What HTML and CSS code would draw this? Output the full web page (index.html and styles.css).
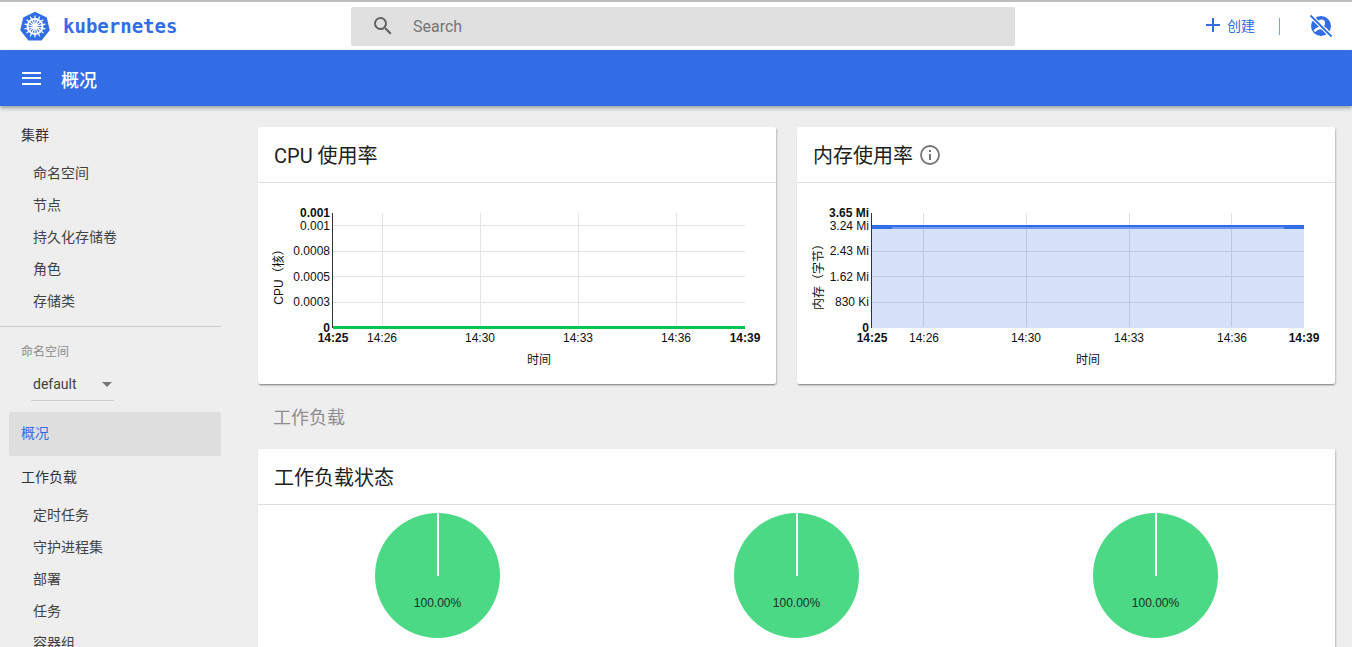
FILE: index.html
```html
<!DOCTYPE html>
<html lang="zh-CN">
<head>
   <meta charset="UTF-8">
   <meta name="viewport" content="width=device-width, initial-scale=1.0">
   <title>概况 - Kubernetes Dashboard</title>
   <link rel="stylesheet" href="styles.css">
</head>
<body>
   <header class="topbar">
      <div class="brand">
         <svg class="brand-logo" viewBox="0 0 32 32" width="30" height="30">
            <path d="M16 .8 28.6 6.9 31.7 20.5 23 31.4H9L.3 20.5 3.400 6.900Z" fill="#326de6"/>
            <g fill="none" stroke="#fff">
               <circle cx="16" cy="16.500" r="8" stroke-width="2"/>
               <circle cx="16" cy="16.500" r="2.200" fill="#fff" stroke="none"/>
               <path d="M16 5.500V27.500M7.400 9.700 24.600 23.300M24.600 9.700 7.400 23.300M5.300 19 26.700 14M26.700 19 5.300 14M11.200 26.500 20.800 6.500M20.800 26.500 11.200 6.500" stroke-width="1.300" stroke-linecap="round"/>
            </g>
         </svg>
         <span class="brand-name">kubernetes</span>
      </div>
      <div class="search">
         <svg class="search-icon" viewBox="0 0 24 24" width="24" height="24">
            <path fill="#616161" d="M15.500 14h-.79l-.28-.27A6.470 6.470 0 0 0 16 9.500 6.500 6.500 0 1 0 9.500 16c1.610 0 3.090-.59 4.230-1.570l.27.28v.79l5 4.990L20.490 19l-4.990-5zm-6 0C7.010 14 5 11.990 5 9.500S7.010 5 9.500 5 14 7.010 14 9.500 11.990 14 9.500 14z"/>
         </svg>
         <span class="search-text">Search</span>
      </div>
      <div class="actions">
         <svg class="plus-icon" viewBox="0 0 14 14" width="14" height="14">
            <path d="M6 0h2v6h6v2H8v6H6V8H0V6h6z" fill="#326de6"/>
         </svg>
         <span class="create">创建</span>
         <span class="divider"></span>
         <svg class="user-icon" viewBox="0 0 24 24" width="24" height="24">
            <circle cx="12" cy="12" r="10" fill="#326de6"/>
            <circle cx="12.500" cy="9" r="3.600" fill="#fff"/>
            <path d="M5.500 17.500c1.500-2.600 4-3.500 6.800-3.500 2.700 0 5 .9 6.300 3.500" fill="none" stroke="#fff" stroke-width="2.500"/>
            <path d="M2.500 2.500 21.500 21.500" stroke="#fff" stroke-width="4"/>
            <path d="M1.500 1.500 22.500 22.500" stroke="#326de6" stroke-width="1.800"/>
         </svg>
      </div>
   </header>

   <div class="titlebar">
      <span class="menu-icon"><i></i><i></i><i></i></span>
      <span class="page-title">概况</span>
   </div>

   <div class="layout">
      <nav class="sidebar">
         <div class="nav-head">集群</div>
         <div class="nav-item">命名空间</div>
         <div class="nav-item">节点</div>
         <div class="nav-item">持久化存储卷</div>
         <div class="nav-item">角色</div>
         <div class="nav-item">存储类</div>
         <hr class="nav-line">
         <div class="ns-label">命名空间</div>
         <div class="ns-select"><span>default</span><i class="caret"></i></div>
         <div class="nav-head nav-active">概况</div>
         <div class="nav-head nav-after">工作负载</div>
         <div class="nav-item">定时任务</div>
         <div class="nav-item">守护进程集</div>
         <div class="nav-item">部署</div>
         <div class="nav-item">任务</div>
         <div class="nav-item">容器组</div>
      </nav>

      <main class="content">
         <div class="chart-row">
            <section class="card card-cpu">
               <h2 class="card-title">CPU 使用率</h2>
               <svg class="chart" viewBox="258 183 518 201" width="518" height="201">
                  <g class="grid">
                     <path d="M333 225.500H745M333 251.500H745M333 276.500H745M333 302.500H745"/>
                     <path d="M382.500 213V327M480.500 213V327M578.500 213V327M676.500 213V327"/>
                  </g>
                  <path class="axis" d="M332.500 213V328"/>
                  <rect x="333" y="326" width="412" height="3" fill="#00c752"/>
                  <g class="tick tick-end">
                     <text class="tick-bold" x="330" y="217">0.001</text>
                     <text x="330" y="230">0.001</text>
                     <text x="330" y="255">0.0008</text>
                     <text x="330" y="281">0.0005</text>
                     <text x="330" y="306">0.0003</text>
                     <text class="tick-bold" x="330" y="332">0</text>
                  </g>
                  <g class="tick tick-mid">
                     <text class="tick-bold" x="333" y="342">14:25</text>
                     <text x="382" y="342">14:26</text>
                     <text x="480" y="342">14:30</text>
                     <text x="578" y="342">14:33</text>
                     <text x="676" y="342">14:36</text>
                     <text class="tick-bold" x="745" y="342">14:39</text>
                     <text x="539" y="364">时间</text>
                     <text transform="translate(283 274) rotate(-90)">CPU（核）</text>
                  </g>
               </svg>
            </section>

            <section class="card card-mem">
               <h2 class="card-title">内存使用率
                  <svg class="info-icon" viewBox="0 0 20 20" width="20" height="20">
                     <circle cx="10" cy="10" r="9" fill="none" stroke="#757575" stroke-width="1.800"/>
                     <path d="M9 9h2v6H9zM9 5h2v2H9z" fill="#757575"/>
                  </svg>
               </h2>
               <svg class="chart" viewBox="797 183 538 201" width="538" height="201">
                  <g class="grid">
                     <path d="M871 251.500H1304M871 276.500H1304M871 302.500H1304"/>
                     <path d="M923.500 213V327M1026.500 213V327M1129.500 213V327M1231.500 213V327"/>
                  </g>
                  <rect x="871" y="226" width="433" height="102" fill="#326de6" fill-opacity=".2"/>
                  <rect x="871" y="225" width="433" height="2" fill="#326de6"/>
                  <rect x="871" y="227" width="433" height="2" fill="#6f98ee"/>
                  <rect x="871" y="227" width="21" height="2" fill="#326de6"/>
                  <rect x="1284" y="227" width="20" height="2" fill="#326de6"/>
                  <path class="axis" d="M871.500 213V328"/>
                  <g class="tick tick-end">
                     <text class="tick-bold" x="869" y="217">3.65 Mi</text>
                     <text x="869" y="230">3.24 Mi</text>
                     <text x="869" y="255">2.43 Mi</text>
                     <text x="869" y="281">1.62 Mi</text>
                     <text x="869" y="306">830 Ki</text>
                     <text class="tick-bold" x="869" y="332">0</text>
                  </g>
                  <g class="tick tick-mid">
                     <text class="tick-bold" x="872" y="342">14:25</text>
                     <text x="924" y="342">14:26</text>
                     <text x="1026" y="342">14:30</text>
                     <text x="1129" y="342">14:33</text>
                     <text x="1232" y="342">14:36</text>
                     <text class="tick-bold" x="1304" y="342">14:39</text>
                     <text x="1088" y="364">时间</text>
                     <text transform="translate(823 274) rotate(-90)">内存（字节）</text>
                  </g>
               </svg>
            </section>
         </div>

         <h3 class="section-title">工作负载</h3>

         <section class="card card-status">
            <h2 class="card-title">工作负载状态</h2>
            <div class="pie-row">
               <div class="pie"><span class="pie-gap"></span><span class="pie-label">100.00%</span></div>
               <div class="pie"><span class="pie-gap"></span><span class="pie-label">100.00%</span></div>
               <div class="pie"><span class="pie-gap"></span><span class="pie-label">100.00%</span></div>
            </div>
         </section>
      </main>
   </div>
</body>
</html>
```

FILE: styles.css
```css
* {
    box-sizing: border-box;
}

html, body {
    height: 100%;
}

body {
    margin: 0;
    display: flex;
    flex-direction: column;
    overflow: hidden;
    background: #eeeeee;
    color: #212121;
    font-family: Roboto, "Noto Sans CJK SC", sans-serif;
}

/* top bar */
.topbar {
    display: flex;
    align-items: center;
    flex: none;
    height: 50px;
    padding-left: 20px;
    background: #ffffff;
    border-top: 2px solid #bdbdbd;
}

.brand {
    display: flex;
    align-items: center;
    width: 331px;
}

.brand-name {
    margin-left: 13px;
    color: #326de6;
    font-family: "DejaVu Sans Mono", monospace;
    font-size: 19px;
    font-weight: 700;
}

.search {
    display: flex;
    align-items: center;
    width: 664px;
    height: 39px;
    padding-left: 20px;
    background: #e0e0e0;
    border-radius: 2px;
}

.search-text {
    margin-left: 18px;
    color: #757575;
    font-size: 16px;
}

.actions {
    display: flex;
    align-items: center;
    margin-left: 191px;
}

.plus-icon {
    margin-top: -2px;
}

.create {
    margin: -2px 0 0 7px;
    color: #326de6;
    font-size: 14px;
}

.divider {
    width: 1px;
    height: 17px;
    margin: 0 29px 0 24px;
    background: #7f9fdf;
}

/* blue title bar */
.titlebar {
    display: flex;
    align-items: center;
    flex: none;
    height: 56px;
    padding-left: 22px;
    background: #326de6;
    box-shadow: 0 2px 4px rgba(0, 0, 0, .35);
    color: #ffffff;
    position: relative;
}

.menu-icon {
    display: flex;
    flex-direction: column;
    gap: 3.500px;
    width: 19px;
}

.menu-icon i {
    height: 2px;
    background: #ffffff;
}

.page-title {
    margin-left: 20px;
    padding-top: 1px;
    font-size: 18px;
    font-weight: 500;
}

.layout {
    display: flex;
    flex: 1;
    min-height: 0;
}

/* side navigation */
.sidebar {
    flex: none;
    width: 229px;
    padding: 7px 8px 0 0;
    font-size: 14px;
}

.nav-head {
    height: 44px;
    padding-left: 21px;
    line-height: 44px;
    color: #333333;
}

.nav-item {
    height: 32px;
    padding-left: 33px;
    line-height: 32px;
    color: #424242;
}

.nav-line {
    height: 1px;
    margin: 9px 0 0;
    border: 0;
    background: #d0d0d0;
}

.ns-label {
    margin: 17px 0 0 21px;
    color: #8a8a8a;
    font-size: 12px;
    line-height: 17px;
}

.ns-select {
    display: flex;
    align-items: center;
    justify-content: space-between;
    width: 83px;
    height: 33px;
    margin: 7px 0 0 31px;
    padding: 0 2px;
    border-bottom: 1px solid #d0d0d0;
    color: #424242;
    font-size: 14px;
}

.caret {
    width: 0;
    height: 0;
    border-left: 5px solid transparent;
    border-right: 5px solid transparent;
    border-top: 5px solid #757575;
}

.nav-active {
    margin: 11px 0 0 9px;
    padding-left: 12px;
    background: #dedede;
    border-radius: 2px;
    color: #326de6;
    line-height: 42px;
}

.nav-after {
    margin-top: -1px;
}

/* main area */
.content {
    flex: none;
    width: 1106px;
    padding: 21px 0 0 29px;
}

.chart-row {
    display: flex;
    gap: 21px;
}

.card {
    background: #ffffff;
    border-radius: 2px;
    box-shadow: 0 2px 2px -1px rgba(0, 0, 0, .35), 1px 1px 2px rgba(0, 0, 0, .2);
}

.card-cpu {
    width: 518px;
}

.card-mem {
    width: 538px;
}

.card-title {
    display: flex;
    align-items: center;
    gap: 7px;
    height: 56px;
    margin: 0;
    padding: 0 0 0 16px;
    border-bottom: 1px solid #e0e0e0;
    color: #212121;
    font-size: 20px;
    font-weight: 400;
}

.chart {
    display: block;
}

.grid path {
    fill: none;
    stroke: #e4e4e4;
    stroke-width: 1;
}

.card-mem .grid path {
    stroke: #e0e0e0;
}

.axis {
    fill: none;
    stroke: #333333;
    stroke-width: 1;
}

.tick text {
    fill: #111111;
    font-family: "Liberation Sans", "Noto Sans CJK SC", sans-serif;
    font-size: 12px;
}

.tick-end text {
    text-anchor: end;
}

.tick-mid text {
    text-anchor: middle;
}

.tick .tick-bold {
    font-weight: 700;
}

.section-title {
    height: 65px;
    margin: 0;
    padding-left: 15px;
    color: #8e8e8e;
    font-size: 18px;
    font-weight: 400;
    line-height: 68px;
}

.card-status {
    width: 1077px;
    padding-bottom: 40px;
}

.pie-row {
    display: grid;
    grid-template-columns: repeat(3, 1fr);
    justify-items: center;
    padding-top: 8px;
}

.pie {
    position: relative;
    width: 125px;
    height: 125px;
    background: #4cd986;
    border-radius: 50%;
}

.pie-gap {
    position: absolute;
    left: 61.500px;
    top: 0;
    width: 2px;
    height: 63px;
    background: #ffffff;
}

.pie-label {
    position: absolute;
    left: 0;
    right: 0;
    top: 83px;
    color: #1a2e22;
    font-family: "Liberation Sans", sans-serif;
    font-size: 12px;
    text-align: center;
}
```
